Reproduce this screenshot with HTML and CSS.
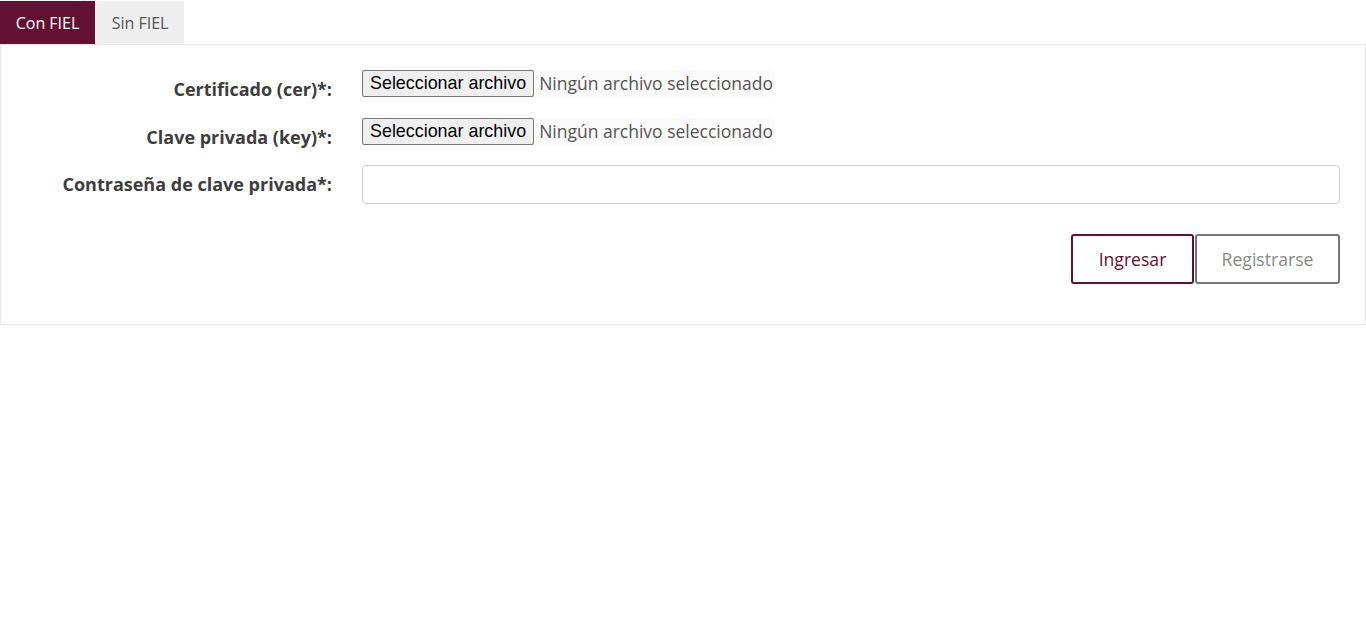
FILE: index.html
```html
<!DOCTYPE html>
<html lang="es">
<head>
<meta charset="utf-8">
<title>Acceso</title>
<link rel="stylesheet" href="styles.css">
</head>
<body>
<div class="tabs">
  <a class="tab active">Con FIEL</a>
  <a class="tab">Sin FIEL</a>
</div>
<div class="panel">
  <form class="form">
    <div class="row row-file">
      <label class="label">Certificado (cer)*:</label>
      <div class="file"><button type="button" class="file-btn">Seleccionar archivo</button><span class="file-name">Ningún archivo seleccionado</span></div>
    </div>
    <div class="row row-file">
      <label class="label">Clave privada (key)*:</label>
      <div class="file"><button type="button" class="file-btn">Seleccionar archivo</button><span class="file-name">Ningún archivo seleccionado</span></div>
    </div>
    <div class="row row-pass">
      <label class="label">Contraseña de clave privada*:</label>
      <input class="text-input" type="password">
    </div>
    <div class="actions">
      <button type="button" class="btn btn-primary">Ingresar</button>
      <button type="button" class="btn btn-secondary">Registrarse</button>
    </div>
  </form>
</div>
</body>
</html>
```
FILE: styles.css
```css
html, body {
  margin: 0;
  padding: 0;
  background: #fff;
  font-family: "Open Sans", "Liberation Sans", sans-serif;
  font-size: 16px;
  color: #333;
}

.tabs {
  display: flex;
  gap: 1px;
  padding-top: 1px;
  height: 43px;
}

.tab {
  display: flex;
  align-items: center;
  justify-content: center;
  height: 43px;
  font-size: 16px;
  color: #555;
  background: #eee;
  box-sizing: border-box;
}

.tab:first-child {
  width: 95px;
}

.tab:nth-child(2) {
  width: 88px;
}

.tab.active {
  background: #611232;
  color: #fff;
}

.panel {
  border: 1px solid #e6e6e6;
  box-sizing: border-box;
  width: 1366px;
  padding: 25px 25px 40px 0;
}

.row {
  display: grid;
  grid-template-columns: 331px 1fr;
  column-gap: 30px;
  align-items: start;
}

.row-file {
  height: 38px;
  margin-bottom: 10px;
}

.row-file + .row-file {
  margin-bottom: 9px;
}

.label {
  text-align: right;
  font-weight: 700;
  font-size: 18px;
  color: #3d3d3d;
  line-height: 24px;
  padding-top: 7px;
  white-space: nowrap;
}

.file {
  display: flex;
  align-items: center;
}

.file-btn {
  font-family: "Liberation Sans", Arial, sans-serif;
  font-size: 17.9px;
  color: #000;
  background: #efefef;
  border: 1px solid #767676;
  border-radius: 2px;
  height: 27px;
  padding: 0 7px;
  margin: 0;
}

.file-name {
  background: #fafafa;
  color: #555;
  font-size: 17.5px;
  line-height: 27px;
  padding: 0 1px 0 5px;
  white-space: nowrap;
}

.text-input {
  height: 39px;
  box-sizing: border-box;
  border: 1px solid #ccc;
  border-radius: 4px;
  padding: 6px 12px;
  width: 100%;
  font-size: 16px;
  margin: 0;
}

.actions {
  display: flex;
  justify-content: flex-end;
  gap: 1px;
  margin-top: 30px;
}

.btn {
  height: 50px;
  box-sizing: border-box;
  background: #fff;
  font-family: "Open Sans", "Liberation Sans", sans-serif;
  font-size: 17.6px;
  border-radius: 3px;
  margin: 0;
  padding: 0;
}

.btn-primary {
  width: 123px;
  border: 2px solid #611232;
  color: #611232;
}

.btn-secondary {
  width: 145px;
  border: 2px solid #777;
  color: #888;
}
```
